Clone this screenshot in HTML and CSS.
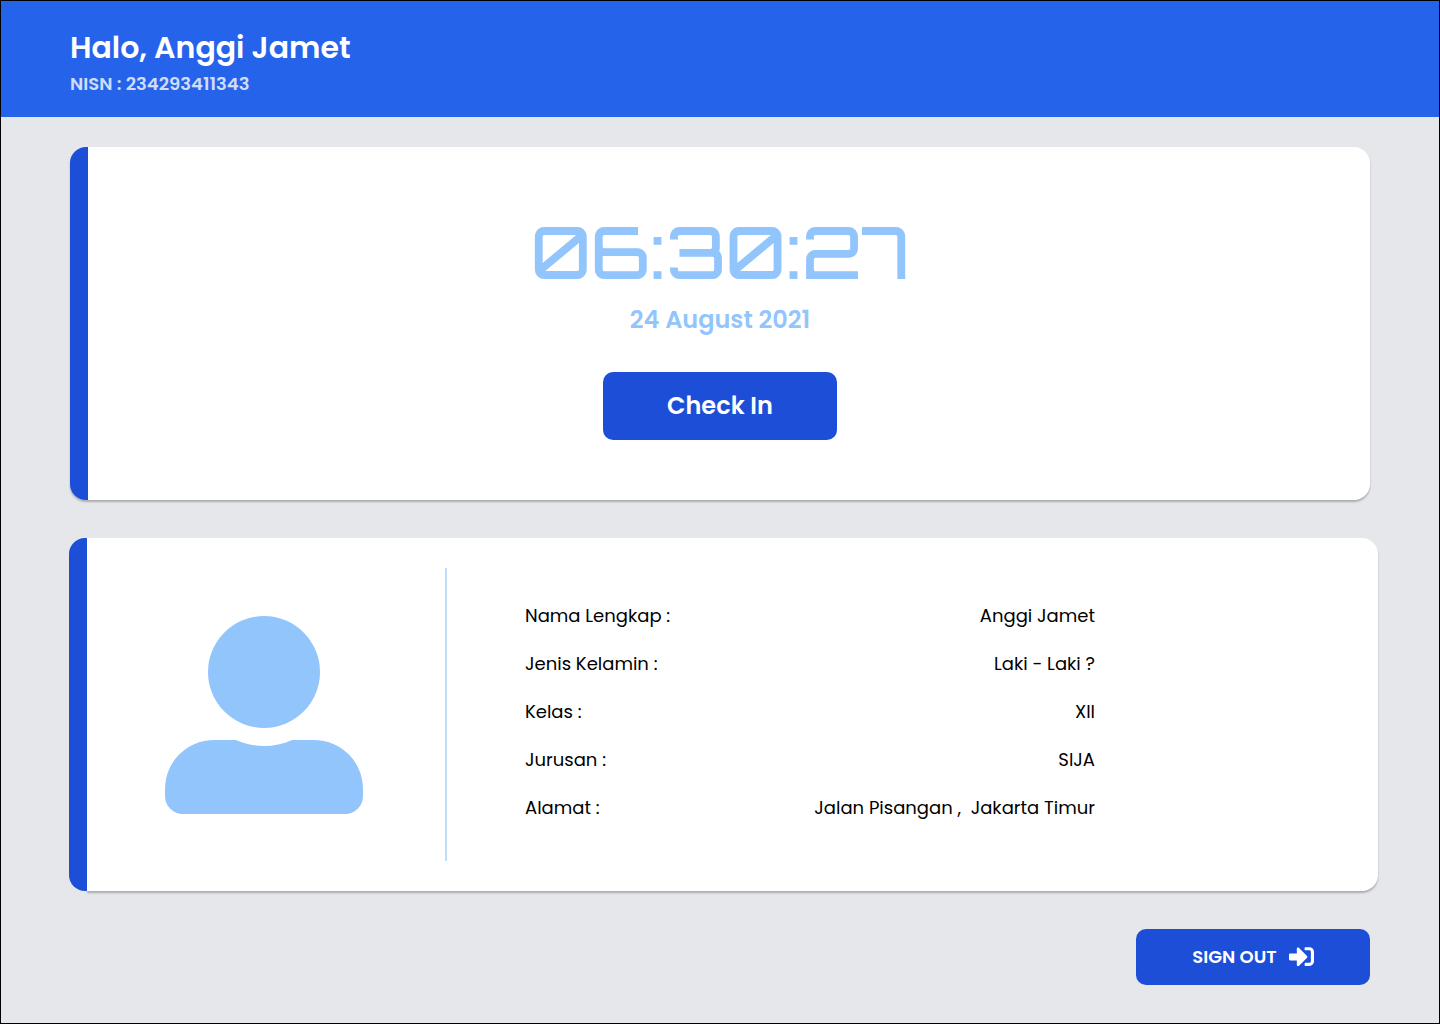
FILE: index.html
```html
<!DOCTYPE html>
<html lang="id">
<head>
  <meta charset="utf-8">
  <meta name="viewport" content="width=device-width, initial-scale=1">
  <title>Halo, Anggi Jamet</title>
  <link rel="stylesheet" href="styles.css">
</head>
<body>
  <header class="header">
    <h1 class="header-title">Halo, Anggi Jamet</h1>
    <p class="header-id">NISN : 234293411343</p>
  </header>

  <main class="main">
    <section class="clock-card">
      <time class="clock">06:30:27</time>
      <p class="date">24 August 2021</p>
      <button class="button button-checkin" type="button">Check In</button>
    </section>

    <section class="profile">
      <div class="profile-bar"></div>
      <div class="profile-body">
        <div class="profile-photo">
          <svg class="avatar" viewBox="0 0 198 198" aria-hidden="true">
            <circle cx="99" cy="56" r="56"/>
            <path d="M49 124H71C89 132 109 132 127 124H149A49 49 0 0 1 198 173V180A18 18 0 0 1 180 198H18A18 18 0 0 1 0 180V173A49 49 0 0 1 49 124Z"/>
          </svg>
        </div>
        <dl class="details">
          <div class="detail"><dt>Nama Lengkap :</dt><dd>Anggi Jamet</dd></div>
          <div class="detail"><dt>Jenis Kelamin :</dt><dd>Laki - Laki ?</dd></div>
          <div class="detail"><dt>Kelas :</dt><dd>XII</dd></div>
          <div class="detail"><dt>Jurusan :</dt><dd>SIJA</dd></div>
          <div class="detail"><dt>Alamat :</dt><dd>Jalan Pisangan ,  Jakarta Timur</dd></div>
        </dl>
      </div>
    </section>

    <button class="button button-signout" type="button">
      SIGN OUT
      <svg class="signout-icon" viewBox="0 64 512 384" aria-hidden="true">
        <path d="M416 448h-84c-6.600 0-12-5.400-12-12v-40c0-6.600 5.400-12 12-12h84c17.700 0 32-14.300 32-32V160c0-17.700-14.300-32-32-32h-84c-6.600 0-12-5.400-12-12V76c0-6.600 5.400-12 12-12h84c53 0 96 43 96 96v192c0 53-43 96-96 96zm-47-201L201 79c-15-15-41-4.500-41 17v96H24c-13.300 0-24 10.700-24 24v96c0 13.300 10.700 24 24 24h136v96c0 21.500 26 32 41 17l168-168c9.300-9.400 9.300-24.600 0-34z"/>
      </svg>
    </button>
  </main>
</body>
</html>
```
FILE: styles.css
```css
* {
  box-sizing: border-box;
}

body {
  margin: 0;
  min-height: 100vh;
  border: 1px solid #000;
  background: #e5e7eb;
  color: #000;
  font-family: Poppins, Inter, sans-serif;
  font-size: 18px;
  line-height: 28px;
}

h1,
p,
dl,
dd {
  margin: 0;
}

.header {
  display: flex;
  flex-direction: column;
  gap: 2px;
  padding: 27px 69px 19px;
  background: #2563eb;
  color: #fff;
}

.header-title {
  font-size: 30px;
  font-weight: 600;
  line-height: 40px;
}

.header-id {
  color: rgba(255, 255, 255, 0.8);
  font-weight: 600;
}

.main {
  display: flex;
  flex-direction: column;
  padding: 30px 69px 38px;
}

.clock-card {
  display: flex;
  flex-direction: column;
  align-items: center;
  padding: 62px 18px 60px 0;
  border-left: 18px solid #1d4ed8;
  border-radius: 16px;
  background: #fff;
  box-shadow: 0 2px 2px rgba(0, 0, 0, 0.25);
}

.clock {
  margin-bottom: 9px;
  color: #93c5fd;
  font-family: Orbitron, Inter, sans-serif;
  font-size: 72px;
  font-weight: 500;
  line-height: 84px;
}

.date {
  margin-bottom: 34px;
  color: #93c5fd;
  font-size: 24px;
  font-weight: 600;
  line-height: 36px;
}

.button {
  display: flex;
  align-items: center;
  justify-content: center;
  width: 234px;
  padding: 0 0 2px;
  border: 0;
  border-radius: 10px;
  background: #1d4ed8;
  color: #fff;
  font-family: inherit;
  font-weight: 600;
  cursor: pointer;
}

.button-checkin {
  height: 68px;
  font-size: 24px;
}

.button-signout {
  gap: 12px;
  align-self: flex-end;
  height: 56px;
  font-size: 18px;
}

.signout-icon {
  width: 25px;
  height: 19px;
  fill: currentColor;
}

.profile {
  display: flex;
  margin: 38px -8px 38px -1px;
}

.profile-bar {
  position: relative;
  z-index: 1;
  width: 18px;
  border-radius: 16px 0 0 16px;
  background: #1d4ed8;
}

.profile-body {
  display: flex;
  flex: 1;
  padding: 30px 0;
  border-radius: 0 16px 16px 0;
  background: #fff;
  box-shadow: 0 2px 2px rgba(0, 0, 0, 0.25);
}

.profile-photo {
  display: flex;
  align-items: center;
  padding: 0 82px 0 78px;
  border-right: 2px solid #bfdbfe;
}

.avatar {
  width: 198px;
  height: 198px;
  fill: #93c5fd;
}

.details {
  display: flex;
  flex-direction: column;
  flex: 0 1 570px;
  gap: 20px;
  margin-left: 78px;
  padding: 34px 0 39px;
}

.detail {
  display: flex;
  justify-content: space-between;
}

.detail dd {
  white-space: pre;
}
```
